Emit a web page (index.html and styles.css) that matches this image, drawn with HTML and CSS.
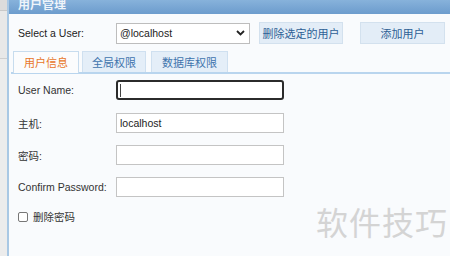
FILE: index.html
```html
<!DOCTYPE html>
<html>
<head>
<meta charset="utf-8">
<link rel="stylesheet" href="styles.css">
</head>
<body>
<div class="screen">
  <div class="side"></div>
  <div class="dialog">
    <div class="titlebar"><span class="title">用户管理</span></div>
    <div class="content">
      <div class="toprow">
        <span class="lbl-select">Select a User:</span>
        <div class="select"><span>@localhost</span>
          <svg width="9" height="6" viewBox="0 0 9 6"><path d="M1 1 L4.5 4.5 L8 1" fill="none" stroke="#222" stroke-width="1.8"/></svg>
        </div>
        <button class="btn btn-del">删除选定的用户</button>
        <button class="btn btn-add">添加用户</button>
      </div>
      <div class="tabs">
        <div class="tab active">用户信息</div>
        <div class="tab">全局权限</div>
        <div class="tab">数据库权限</div>
      </div>
      <div class="form">
        <div class="row"><label>User Name:</label><div class="input focus"><span class="caret"></span></div></div>
        <div class="row"><label>主机:</label><div class="input">localhost</div></div>
        <div class="row"><label>密码:</label><div class="input"></div></div>
        <div class="row"><label>Confirm Password:</label><div class="input"></div></div>
        <div class="check"><span class="box"></span><span>删除密码</span></div>
      </div>
      <div class="watermark">软件技巧</div>
    </div>
  </div>
</div>
</body>
</html>
```
FILE: styles.css
```css
* { box-sizing: border-box; }
html, body { margin: 0; padding: 0; }
body {
  width: 450px; height: 256px; overflow: hidden;
  font-family: "Liberation Sans", "Noto Sans CJK SC", sans-serif;
  font-size: 10px; color: #333;
  background: #e6e6e6;
}
.screen { display: flex; height: 256px; }
.side {
  width: 7px; flex: none;
  background: linear-gradient(#dcdcdc 0 10px, #c9c9c9 10px 11px, #e8e8e8 11px 58px, #cfcfcf 58px 59px, #ececec 59px);
}
.dialog {
  flex: 1; display: flex; flex-direction: column;
  border-left: 2px solid #a9c8e4;
  background: #f9fbfd;
}
.titlebar {
  height: 14px; flex: none; overflow: hidden;
  background: linear-gradient(#87b2db, #6c9ccd);
  padding-left: 9px;
}
.title {
  display: block; margin-top: -3px;
  font-size: 12px; line-height: 13px; font-weight: bold; color: #eef4fa;
  font-family: "Noto Sans CJK SC", sans-serif;
}
.content { flex: 1; position: relative; padding: 8px 0 0 2px; }
.toprow { display: flex; align-items: center; height: 22px; padding-left: 7px; }
.lbl-select { width: 98px; color: #222; font-size: 10.5px; }
.select {
  width: 134px; height: 21px; border: 1px solid #bdbdbd; background: #fff;
  display: flex; align-items: center; justify-content: space-between;
  padding: 0 4px 0 3px; color: #222; font-size: 10.5px;
}
.btn {
  height: 22px; border: 1px solid #d3e1ee; background: #e3edf7;
  font-family: "Noto Sans CJK SC", sans-serif; font-size: 11px; color: #2e5f95;
  padding: 0; margin: 0;
}
.btn-del { width: 84px; margin-left: 9px; }
.btn-add { width: 85px; margin-left: 17px; }
.tabs {
  display: flex; margin-top: 7px; padding-left: 2px; gap: 3px;
  border-bottom: 2px solid #b9d5ee; height: 23px;
}
.tab {
  height: 21px; line-height: 20px; text-align: center; padding: 0;
  font-family: "Noto Sans CJK SC", sans-serif; font-size: 11px;
  color: #3f74ad; background: #e4eef8; border: 1px solid #cfe0f0; border-bottom: none;
}
.tab.active { background: #fbfcfd; color: #e8772a; height: 22px; border-color: #c7dcee; }
.tab:nth-child(1) { width: 66px; }
.tab:nth-child(2) { width: 64px; }
.tab:nth-child(3) { width: 77px; margin-left: 2px; }
.form { padding: 6px 0 0 7px; display: flex; flex-direction: column; gap: 12px; }
.row { display: flex; align-items: center; height: 20px; }
.row label { width: 98px; color: #333; font-size: 10.5px; font-family: "Liberation Sans", "Noto Sans CJK SC", sans-serif; }
.input {
  width: 168px; height: 20px; border: 1px solid #c4c4c4; background: #fff;
  padding-left: 3px; line-height: 18px; color: #222; font-size: 10.5px;
}
.input.focus { border: 2px solid #2b2b2b; border-radius: 3px; display: flex; align-items: center; padding-left: 2px; }
.caret { width: 1px; height: 13px; background: #444; }
.row:nth-child(2) { margin-top: 1px; }
.check { display: flex; align-items: center; gap: 5px; margin-top: 0; font-size: 10.5px; font-family: "Noto Sans CJK SC", sans-serif; }
.box { width: 10px; height: 10px; border: 1px solid #777; border-radius: 2px; background: #fff; }
.watermark {
  position: absolute; left: 307px; top: 184px;
  font-family: "Noto Sans CJK SC", sans-serif; font-size: 32px; color: #d4d4d4;
  letter-spacing: 1px;
}
```
